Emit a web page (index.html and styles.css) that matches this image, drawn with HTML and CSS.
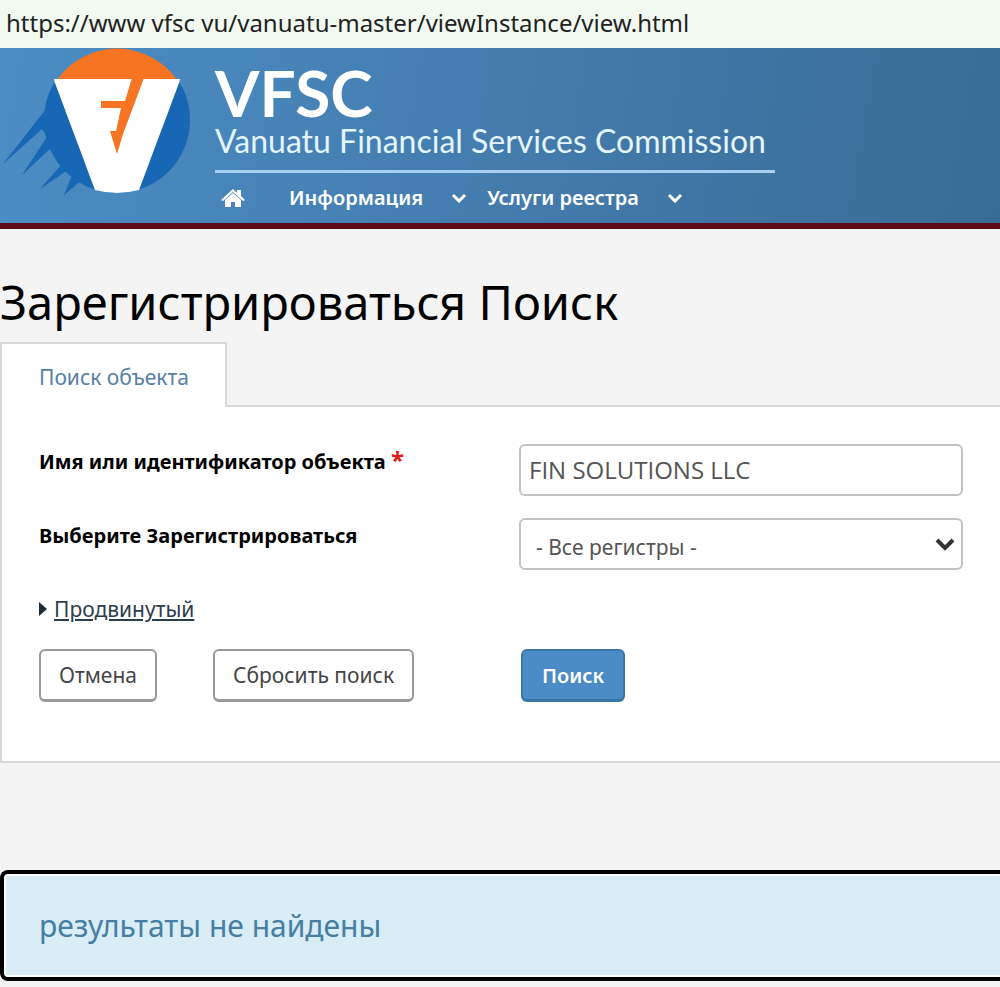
FILE: index.html
```
<!DOCTYPE html>
<html lang="ru">
<head>
    <meta charset="UTF-8">
    <title>VFSC</title>
    <link rel="stylesheet" href="styles.css">
</head>
<body>
<div id="address">https://www vfsc vu/vanuatu-master/viewInstance/view.html</div>
<header id="header">
    <svg class="logo" width="192" height="150" viewBox="0 0 192 150">
        <g fill="#1767b4">
            <path d="M54 35 A73 73 0 1 0 180 35 Z"/>
            <path d="M50 44 L46 61 L3 116 L42 81 Q44 84 47 89 L22 127 L50 101 Q55 111 62 116 L40 141 L68 122 Q71 125 72 127 L64 147 L82 132 L100 140 Z"/>
        </g>
        <path fill="#f77422" d="M57 32 A73 73 0 0 1 177 32 Z"/>
        <path fill="#fff" d="M54 31 H180 L179 35 L139 142 Q117 148 95 142 L55 35 Z"/>
        <path fill="#f77422" d="M132 30 H144 L123 86 L117 106 L110 83 H116 L121 60 H101 V53 H125 Z"/>
    </svg>
    <div class="brand">
        <div class="brand-name">VFSC</div>
        <div class="brand-full">Vanuatu Financial Services Commission</div>
        <nav id="nav">
            <a class="home" href="#" aria-label="Главная">
                <svg width="24" height="20" viewBox="0 0 24 20" fill="#fff">
                    <path d="M12 1 L16 5 V2 H20 V8 L24 12 L22 13 L12 4 L2 13 L0 12 Z"/>
                    <path d="M12 5 L20 12 V19 H14 V14 H10 V19 H4 V12 Z"/>
                </svg>
            </a>
            <a href="#">Информация
                <svg width="16" height="10" viewBox="0 0 16 10"><path d="M2 2 L8 8 L14 2"/></svg>
            </a>
            <a href="#">Услуги реестра
                <svg width="16" height="10" viewBox="0 0 16 10"><path d="M2 2 L8 8 L14 2"/></svg>
            </a>
        </nav>
    </div>
</header>
<main>
    <h1>Зарегистрироваться Поиск</h1>
    <div class="tabs"><a class="selected" href="#search">Поиск объекта</a></div>
    <form id="search">
        <div class="row">
            <label for="entity">Имя или идентификатор объекта <span class="required">*</span></label>
            <input id="entity" type="text" value="FIN SOLUTIONS LLC">
        </div>
        <div class="row">
            <label for="register">Выберите Зарегистрироваться</label>
            <div class="select">
                <select id="register">
                    <option>- Все регистры -</option>
                </select>
                <svg width="20" height="14" viewBox="0 0 20 14"><path d="M2 2 L10 10 L18 2"/></svg>
            </div>
        </div>
        <div class="advanced">
            <svg width="8" height="14" viewBox="0 0 8 14"><path d="M0 0 L8 7 L0 14 Z" fill="#1d2a35"/></svg>
            <a href="#">Продвинутый</a>
        </div>
        <div class="buttons">
            <div class="left">
                <button type="button">Отмена</button>
                <button type="reset">Сбросить поиск</button>
            </div>
            <button class="primary" type="submit">Поиск</button>
        </div>
    </form>
    <div class="alert">результаты не найдены</div>
</main>
</body>
</html>
```
FILE: styles.css
```
*{
    box-sizing: border-box;
}
body{
    margin: 0;
    background: #f4f4f4;
    color: #000;
    font: 21px/30px "Noto Sans", "Open Sans", sans-serif;
    overflow-x: hidden;
}
a{
    color: inherit;
    text-decoration: none;
}
#address{
    height: 48px;
    padding: 0 6px;
    background: #f1f9f1;
    color: #222;
    font-size: 24px;
    line-height: 46px;
    white-space: nowrap;
}
#header{
    display: flex;
    border-bottom: 6px solid #5c0a16;
    background: linear-gradient(100deg, #4b8dc5, #447cae 50%, #396c94);
    color: #fff;
}
.logo{
    flex: none;
}
.brand{
    margin-left: 23px;
    padding-top: 14px;
    white-space: nowrap;
}
.brand-name{
    font: bold 64px/62px Lato, sans-serif;
}
.brand-full{
    height: 49px;
    padding-right: 9px;
    border-bottom: 3px solid #a9cff0;
    color: #e4f5ff;
    font: 32px/34px Lato, sans-serif;
}
#nav{
    display: flex;
    align-items: center;
    height: 50px;
    padding-left: 6px;
    font-size: 20px;
    font-weight: 600;
}
#nav a{
    display: flex;
    align-items: center;
    gap: 28px;
    margin-right: 20px;
}
#nav .home{
    margin-right: 44px;
}
#nav path{
    fill: none;
    stroke: #fff;
    stroke-width: 3;
}
#nav .home path{
    fill: #fff;
    stroke: none;
}
h1{
    margin: 0;
    padding: 40px 0 7px;
    font-size: 47px;
    font-weight: 400;
    line-height: 66px;
    white-space: nowrap;
}
.tabs{
    display: flex;
}
.tabs .selected{
    height: 65px;
    margin-bottom: -2px;
    padding: 0 36px 0 37px;
    border: 2px solid #d8d8d8;
    border-bottom: 0;
    background: #fff;
    color: #5580a6;
    line-height: 66px;
    position: relative;
}
#search{
    padding: 37px 37px 59px;
    border: 2px solid #d8d8d8;
    border-right: 0;
    background: #fff;
}
.row{
    display: grid;
    grid-template-columns: 480px 1fr;
    margin-bottom: 22px;
}
.row label{
    font-size: 20px;
    font-weight: bold;
    line-height: 36px;
}
.required{
    color: #e01818;
    font-size: 24px;
    line-height: 30px;
}
input,
select{
    width: 100%;
    height: 52px;
    border: 2px solid #c2c2c2;
    border-radius: 6px;
    background: #fff;
    color: #555;
    font: 24px "Open Sans", sans-serif;
    padding: 0 8px 2px;
}
select{
    appearance: none;
    padding: 6px 15px 0;
    font: 21px "Noto Sans", sans-serif;
}
.select{
    position: relative;
}
.select svg{
    position: absolute;
    right: 8px;
    top: 20px;
    fill: none;
    stroke: #333;
    stroke-width: 4;
    pointer-events: none;
}
.advanced{
    display: flex;
    align-items: center;
    gap: 7px;
    height: 34px;
    color: #2c3e4c;
}
.advanced a{
    text-decoration: underline;
}
.buttons{
    display: grid;
    grid-template-columns: 482px 1fr;
    justify-items: start;
    margin-top: 23px;
}
.left{
    display: flex;
    gap: 56px;
}
button{
    height: 53px;
    padding: 0 18px;
    border: 2px solid #999;
    border-bottom-width: 3px;
    border-radius: 6px;
    background: #fff;
    color: #444;
    font: 21px "Noto Sans", sans-serif;
}
.primary{
    padding: 0 19px;
    border-color: #3a76a8;
    background: #4b8cc6;
    color: #fff;
    font-size: 20px;
    font-weight: 600;
}
.alert{
    margin: 107px 0 6px;
    padding: 0 35px;
    border: 4px solid #000;
    border-right: 0;
    border-radius: 8px 0 0 8px;
    box-shadow: inset 2px 0 #fff, inset 0 2px #fff, inset 0 -2px #fff;
    background: #d9edf7;
    color: #477ea3;
    font-size: 30px;
    line-height: 103px;
}
```
